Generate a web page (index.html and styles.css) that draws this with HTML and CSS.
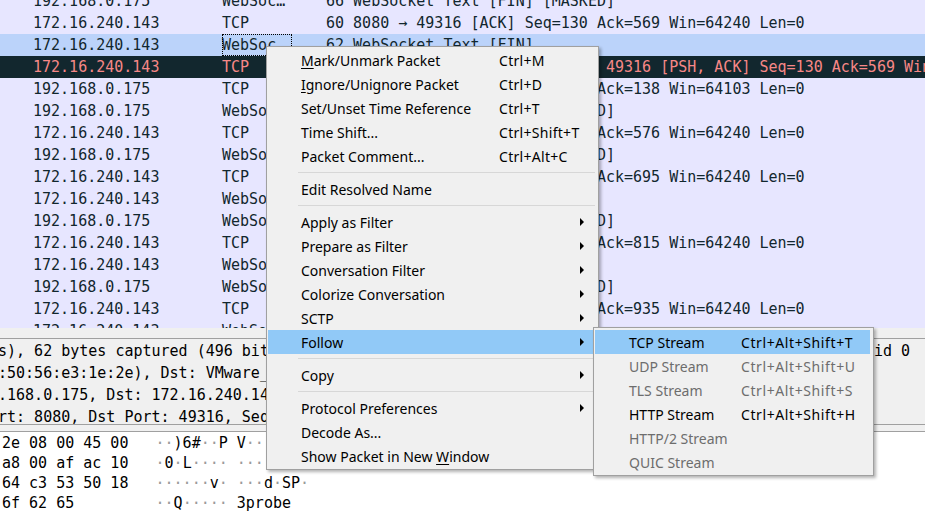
FILE: index.html
```html
<!DOCTYPE html>
<html>
<head>
<meta charset="utf-8">
<title>Wireshark context menu</title>
<link rel="stylesheet" href="styles.css">
</head>
<body>
<div class="app">
  <div class="plist">
    <div class="rows">
      <div class="prow"><span></span><span>192.168.0.175</span><span>WebSoc…</span><span class="info">66 WebSocket Text [FIN] [MASKED]</span></div>
      <div class="prow"><span></span><span>172.16.240.143</span><span>TCP</span><span class="info">60 8080 → 49316 [ACK] Seq=130 Ack=569 Win=64240 Len=0</span></div>
      <div class="prow sel"><span></span><span>172.16.240.143</span><span class="focus">WebSoc…</span><span class="info">62 WebSocket Text [FIN]</span></div>
      <div class="prow bad"><span></span><span>172.16.240.143</span><span>TCP</span><span class="info">68 [TCP Retransmission] 8080 → 49316 [PSH, ACK] Seq=130 Ack=569 Win=64240 Len=8</span></div>
      <div class="prow"><span></span><span>192.168.0.175</span><span>TCP</span><span class="info">54 49316 → 8080 [ACK] Seq=569 Ack=138 Win=64103 Len=0</span></div>
      <div class="prow"><span></span><span>192.168.0.175</span><span>WebSoc…</span><span class="info">66 WebSocket Text [FIN] [MASKED]</span></div>
      <div class="prow"><span></span><span>172.16.240.143</span><span>TCP</span><span class="info">60 8080 → 49316 [ACK] Seq=138 Ack=576 Win=64240 Len=0</span></div>
      <div class="prow"><span></span><span>192.168.0.175</span><span>WebSoc…</span><span class="info">66 WebSocket Text [FIN] [MASKED]</span></div>
      <div class="prow"><span></span><span>172.16.240.143</span><span>TCP</span><span class="info">60 8080 → 49316 [ACK] Seq=138 Ack=695 Win=64240 Len=0</span></div>
      <div class="prow"><span></span><span>172.16.240.143</span><span>WebSoc…</span><span class="info">62 WebSocket Text [FIN]</span></div>
      <div class="prow"><span></span><span>192.168.0.175</span><span>WebSoc…</span><span class="info">66 WebSocket Text [FIN] [MASKED]</span></div>
      <div class="prow"><span></span><span>172.16.240.143</span><span>TCP</span><span class="info">60 8080 → 49316 [ACK] Seq=146 Ack=815 Win=64240 Len=0</span></div>
      <div class="prow"><span></span><span>172.16.240.143</span><span>WebSoc…</span><span class="info">62 WebSocket Text [FIN]</span></div>
      <div class="prow"><span></span><span>192.168.0.175</span><span>WebSoc…</span><span class="info">66 WebSocket Text [FIN] [MASKED]</span></div>
      <div class="prow"><span></span><span>172.16.240.143</span><span>TCP</span><span class="info">60 8080 → 49316 [ACK] Seq=154 Ack=935 Win=64240 Len=0</span></div>
      <div class="prow"><span></span><span>172.16.240.143</span><span>WebSoc…</span><span class="info">62 WebSocket Text [FIN]</span></div>
    </div>
  </div>
  <div class="split"></div>
  <div class="details">
    <div class="drow">s), 62 bytes captured (496 bits) on interface \Device\NPF_{6E5D0B4C-2A31-4F7E-9C1B-8D2E4A7F3C1}, id 0</div>
    <div class="drow">:50:56:e3:1e:2e), Dst: VMware_36:23:9b (00:0c:29:36:23:9b)</div>
    <div class="drow">.168.0.175, Dst: 172.16.240.143</div>
    <div class="drow">rt: 8080, Dst Port: 49316, Seq: 130, Ack: 569, Len: 8</div>
  </div>
  <div class="split2"></div>
  <div class="hex">
    <div class="hrow">2e 08 00 45 00   <span class="d">··</span>)6#<span class="d">··</span>P V<span class="d">··</span>.<span class="d">··</span>E<span class="d">·</span></div>
    <div class="hrow">a8 00 af ac 10   <span class="d">·</span>0<span class="d">·</span>L<span class="d">····</span> <span class="d">········</span></div>
    <div class="hrow">64 c3 53 50 18   <span class="d">······</span>v<span class="d">·</span> <span class="d">···</span>d<span class="d">·</span>SP<span class="d">·</span></div>
    <div class="hrow">6f 62 65         <span class="d">··</span>Q<span class="d">·····</span> 3probe</div>
  </div>

  <div class="menu">
    <div class="mi"><span></span><span><u>M</u>ark/Unmark Packet</span><span class="sc">Ctrl+M</span><span></span></div>
    <div class="mi"><span></span><span><u>I</u>gnore/Unignore Packet</span><span class="sc">Ctrl+D</span><span></span></div>
    <div class="mi"><span></span><span>Set/Unset Time Reference</span><span class="sc">Ctrl+T</span><span></span></div>
    <div class="mi"><span></span><span>Time Shift...</span><span class="sc">Ctrl+Shift+T</span><span></span></div>
    <div class="mi"><span></span><span>Packet Comment...</span><span class="sc">Ctrl+Alt+C</span><span></span></div>
    <div class="sep"></div>
    <div class="mi"><span></span><span>Edit Resolved Name</span><span></span><span></span></div>
    <div class="sep"></div>
    <div class="mi"><span></span><span>Apply as Filter</span><span></span><span class="arr"></span></div>
    <div class="mi"><span></span><span>Prepare as Filter</span><span></span><span class="arr"></span></div>
    <div class="mi"><span></span><span>Conversation Filter</span><span></span><span class="arr"></span></div>
    <div class="mi"><span></span><span>Colorize Conversation</span><span></span><span class="arr"></span></div>
    <div class="mi"><span></span><span>SCTP</span><span></span><span class="arr"></span></div>
    <div class="mi hl"><span></span><span>Follow</span><span></span><span class="arr"></span></div>
    <div class="sep"></div>
    <div class="mi"><span></span><span>Copy</span><span></span><span class="arr"></span></div>
    <div class="sep"></div>
    <div class="mi"><span></span><span>Protocol Preferences</span><span></span><span class="arr"></span></div>
    <div class="mi"><span></span><span>Decode As...</span><span></span><span></span></div>
    <div class="mi"><span></span><span>Show Packet in New <u>W</u>indow</span><span></span><span></span></div>
  </div>

  <div class="sub">
    <div class="mi hl"><span></span><span>TCP Stream</span><span class="sc">Ctrl+Alt+Shift+T</span></div>
    <div class="mi dis"><span></span><span>UDP Stream</span><span class="sc">Ctrl+Alt+Shift+U</span></div>
    <div class="mi dis"><span></span><span>TLS Stream</span><span class="sc">Ctrl+Alt+Shift+S</span></div>
    <div class="mi"><span></span><span>HTTP Stream</span><span class="sc">Ctrl+Alt+Shift+H</span></div>
    <div class="mi dis"><span></span><span>HTTP/2 Stream</span><span></span></div>
    <div class="mi dis"><span></span><span>QUIC Stream</span><span></span></div>
  </div>
</div>
</body>
</html>
```

FILE: styles.css
```css
* { box-sizing: border-box; margin: 0; padding: 0; }
html, body { width: 925px; height: 520px; overflow: hidden; background: #fff; }

.app {
  position: relative;
  width: 925px;
  height: 520px;
  overflow: hidden;
  font-family: "DejaVu Sans Mono", monospace;
  font-size: 15px;
  color: #12272e;
}

/* packet list */
.plist { height: 328px; overflow: hidden; background: #e7e6ff; }
.rows { margin-top: -10px; }
.prow {
  display: grid;
  grid-template-columns: 33px 189px 70px 1fr;
  height: 22px;
  line-height: 22px;
  white-space: pre;
  background: #e7e6ff;
}
.prow .info { padding-left: 34px; }
.prow.sel { background: #bbd3fa; }
.prow.bad { background: #12272e; color: #f78787; }
.focus { outline: 1px dotted #000; outline-offset: -1px; }

/* details */
.split { height: 10px; background: #f0f0f0; }
.details {
  height: 86px;
  background: #f0f0f0;
  border-top: 1px solid #a0a0a0;
  padding-top: 1px;
  overflow: hidden;
  color: #000;
}
.drow { height: 22px; line-height: 22px; white-space: pre; margin-left: -2px; }

/* bytes */
.split2 { height: 7px; background: #f0f0f0; border-top: 1px solid #a0a0a0; }
.hex {
  height: 89px;
  border-top: 1px solid #a0a0a0;
  background: #fff;
  color: #000;
  padding-left: 2px;
  padding-top: 1px;
}
.hrow { height: 20px; line-height: 20px; white-space: pre; }
.d { color: #9a9a9a; }

/* menus */
.menu, .sub {
  position: absolute;
  background: #f0f0f0;
  border: 1px solid #a0a0a0;
  box-shadow: 2px 2px 3px rgba(0, 0, 0, 0.3);
  font-family: "Noto Sans", sans-serif;
  font-size: 14px;
  color: #000;
}
.menu { left: 266px; top: 46px; width: 333px; padding: 1px 5px 1px 1px; }
.sub { left: 593px; top: 327px; width: 281px; padding: 2px 3px 1px 1px; }

.mi {
  display: grid;
  grid-template-columns: 33px 198px 79px 15px;
  height: 24px;
  align-items: center;
  white-space: nowrap;
}
.sub .mi { grid-template-columns: 34px 112px 1fr; }
.mi.hl { background: #91c9f7; }
.mi.dis { color: #6d6d6d; }
.mi u { text-decoration: underline; text-underline-offset: 2px; }
.menu .sc { letter-spacing: 0.3px; }
.sub .sc { letter-spacing: 0.6px; }

.sep { height: 9px; padding-top: 4px; margin-left: 30px; margin-right: -2px; }
.sep::before { content: ""; display: block; height: 1px; background: #d7d7d7; }

.arr {
  width: 0;
  height: 0;
  margin-left: 2px;
  border-left: 4px solid #000;
  border-top: 4px solid transparent;
  border-bottom: 4px solid transparent;
}
```
